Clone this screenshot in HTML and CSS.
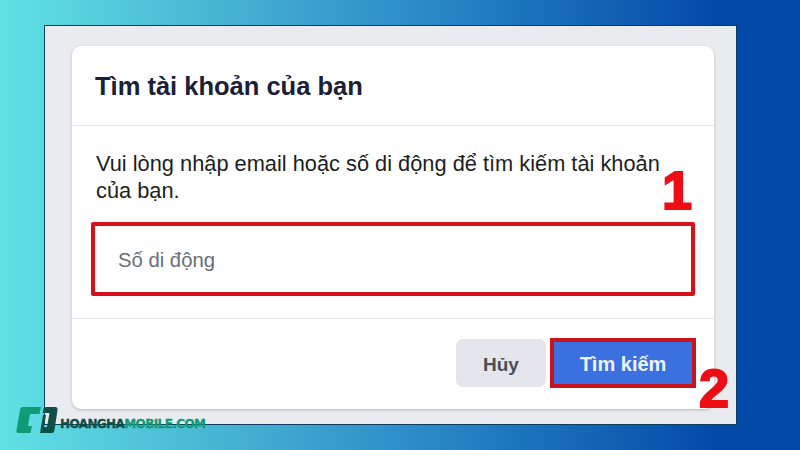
FILE: index.html
```html
<!DOCTYPE html>
<html lang="vi">
<head>
<meta charset="utf-8">
<title>Tìm tài khoản của bạn</title>
<link rel="stylesheet" href="styles.css">
</head>
<body>
<main class="frame">
  <section class="card">
    <h1 class="card-title">Tìm tài khoản của bạn</h1>
    <div class="card-body">
      <p class="hint">Vui lòng nhập email hoặc số di động để tìm kiếm tài khoản của bạn.</p>
      <div class="field">Số di động</div>
    </div>
    <div class="card-actions">
      <button class="btn btn-cancel">Hủy</button>
      <div class="btn-highlight"><button class="btn btn-primary">Tìm kiếm</button></div>
    </div>
  </section>
</main>
<span class="step step-one">1</span>
<span class="step step-two">2</span>
<div class="brand">
  <svg class="brand-icon" width="42" height="27" viewBox="0 0 42 27">
    <path fill="#0f9a78" d="M7 0H25L23.500 7H14L12 19H16L14.500 26H2Q0 26 0.500 23L4 3Q4.500 0 7 0Z"/>
    <path fill="#0f4f48" d="M19 8H27L24 26H36Q38 26 38.500 23L41.500 3Q42 0 39 0H28L26.500 6H33.500L31 20H28L30 8Z"/>
  </svg>
  <span class="brand-name"><span class="brand-dark">HOANGHA</span><span class="brand-green">MOBILE.COM</span></span>
</div>
</body>
</html>
```

FILE: styles.css
```css
* { box-sizing: border-box; }
html, body { margin: 0; height: 450px; overflow: hidden; }
body {
  position: relative;
  padding: 25px 63px 25px 44px;
  background: linear-gradient(90deg, #60e2e4 0%, #45b0d2 30%, #2e8fc9 50%, #1568b8 72%, #0349a8 90%, #0349a8 100%);
  font-family: "Liberation Sans", Arial, sans-serif;
}
.frame {
  height: 400px;
  padding: 20px 22px 14px 27px;
  background: #e9ebef;
  border: 1px solid #0c3f5f;
}
.card {
  height: 363px;
  background: #fff;
  border-radius: 9px;
  box-shadow: 0 1px 3px rgba(0, 0, 0, .22);
  display: flex;
  flex-direction: column;
}
.card-title {
  margin: 0;
  height: 80px;
  padding: 24px 23px 0;
  font-size: 25.500px;
  line-height: 32px;
  font-weight: 700;
  color: #1a2038;
  border-bottom: 1px solid #e4e6ea;
}
.card-body {
  height: 193px;
  padding: 24px 19px 0;
  border-bottom: 1px solid #e4e6ea;
}
.hint {
  margin: 0 15px 0 5px;
  font-size: 21.800px;
  line-height: 27px;
  color: #1c1e21;
}
.field {
  margin-top: 18px;
  height: 74px;
  border: 4px solid #d7111b;
  border-radius: 2px;
  padding: 2px 0 0 23px;
  display: flex;
  align-items: center;
  font-size: 20.300px;
  color: #696f77;
}
.card-actions {
  flex: 1;
  display: flex;
  justify-content: flex-end;
  align-items: flex-start;
  gap: 4px;
  padding: 19px 18px 0 0;
}
.btn {
  border: 0;
  font-family: inherit;
  font-size: 19px;
  font-weight: 700;
  padding: 3px 0 0;
}
.btn-cancel {
  margin-top: 1px;
  width: 90px;
  height: 48px;
  border-radius: 7px;
  background: #e4e6eb;
  color: #4b4f56;
}
.btn-highlight {
  width: 146px;
  height: 50px;
  border: 4px solid #c8141f;
  background: #c8141f;
}
.btn-primary {
  display: block;
  width: 100%;
  height: 100%;
  background: #3b70e0;
  color: #eef4ff;
  font-size: 20px;
}
.step {
  position: absolute;
  font-weight: 700;
  color: #ee0d14;
  line-height: 1;
  -webkit-text-stroke: 2px #ee0d14;
}
.step-one { left: 662px; top: 163px; font-size: 54px; }
.step-two { left: 699px; top: 361px; font-size: 54px; }
.brand {
  position: absolute;
  left: 16px;
  top: 407px;
  display: flex;
  align-items: center;
  gap: 2px;
}
.brand-icon { display: block; }
.brand-name {
  margin-top: 6px;
  font-family: "DejaVu Sans", sans-serif;
  font-weight: 700;
  font-size: 12px;
  letter-spacing: -.6px;
  -webkit-text-stroke: .3px currentColor;
}
.brand-dark { color: #0f4f48; }
.brand-green { color: #0f9a78; }
```
